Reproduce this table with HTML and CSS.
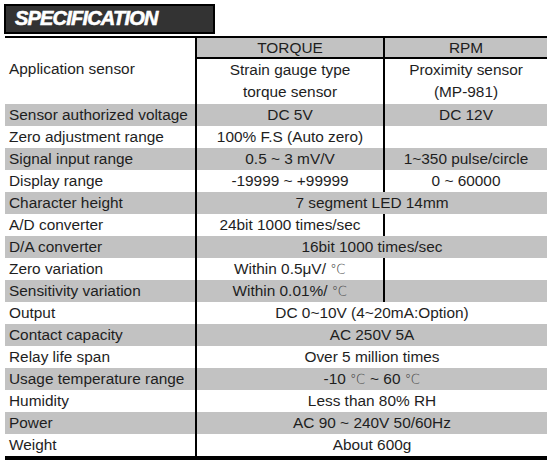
FILE: index.html
```html
<!DOCTYPE html>
<html lang="en">
<head>
  <meta charset="UTF-8">
  <title>Specification</title>
  <link rel="stylesheet" href="styles.css">
</head>
<body>
  <div class="title">SPECIFICATION</div>
  <table class="spec">
    <colgroup>
      <col class="c-name">
      <col class="c-torque">
      <col class="c-rpm">
    </colgroup>
    <tr class="head">
      <td class="name"></td>
      <td class="mid">TORQUE</td>
      <td>RPM</td>
    </tr>
    <tr class="tall">
      <td class="name">Application sensor</td>
      <td class="mid">Strain gauge type<br>torque sensor</td>
      <td>Proximity sensor<br>(MP-981)</td>
    </tr>
    <tr class="gray">
      <td class="name">Sensor authorized voltage</td>
      <td class="mid">DC 5V</td>
      <td>DC 12V</td>
    </tr>
    <tr>
      <td class="name">Zero adjustment range</td>
      <td class="mid">100% F.S (Auto zero)</td>
      <td></td>
    </tr>
    <tr class="gray">
      <td class="name">Signal input range</td>
      <td class="mid">0.5 ~ 3 mV/V</td>
      <td>1~350 pulse/circle</td>
    </tr>
    <tr>
      <td class="name">Display range</td>
      <td class="mid">-19999 ~ +99999</td>
      <td>0 ~ 60000</td>
    </tr>
    <tr class="gray">
      <td class="name">Character height</td>
      <td colspan="2">7 segment LED 14mm</td>
    </tr>
    <tr>
      <td class="name">A/D converter</td>
      <td class="mid">24bit 1000 times/sec</td>
      <td></td>
    </tr>
    <tr class="gray">
      <td class="name">D/A converter</td>
      <td colspan="2">16bit 1000 times/sec</td>
    </tr>
    <tr>
      <td class="name">Zero variation</td>
      <td class="mid">Within 0.5μV/ <span class="deg">℃</span></td>
      <td></td>
    </tr>
    <tr class="gray">
      <td class="name">Sensitivity variation</td>
      <td class="mid">Within 0.01%/ <span class="deg">℃</span></td>
      <td></td>
    </tr>
    <tr>
      <td class="name">Output</td>
      <td colspan="2">DC 0~10V (4~20mA:Option)</td>
    </tr>
    <tr class="gray">
      <td class="name">Contact capacity</td>
      <td colspan="2">AC 250V 5A</td>
    </tr>
    <tr>
      <td class="name">Relay life span</td>
      <td colspan="2">Over 5 million times</td>
    </tr>
    <tr class="gray">
      <td class="name">Usage temperature range</td>
      <td colspan="2">-10 <span class="deg">℃</span> ~ 60 <span class="deg">℃</span></td>
    </tr>
    <tr>
      <td class="name">Humidity</td>
      <td colspan="2">Less than 80% RH</td>
    </tr>
    <tr class="gray">
      <td class="name">Power</td>
      <td colspan="2">AC 90 ~ 240V 50/60Hz</td>
    </tr>
    <tr>
      <td class="name">Weight</td>
      <td colspan="2">About 600g</td>
    </tr>
  </table>
</body>
</html>
```

FILE: styles.css
```css
body {
  margin: 0;
  background: #fff;
  font-family: "Liberation Sans", Arial, sans-serif;
  color: #1e1e1e;
}
.title {
  box-sizing: border-box;
  width: 211px;
  height: 30px;
  margin: 4px 0 0 4px;
  padding-left: 9px;
  background: #333;
  border: 2px solid #000;
  color: #fff;
  font-size: 20px;
  font-weight: bold;
  font-style: italic;
  letter-spacing: -0.8px;
  line-height: 25px;
  -webkit-text-stroke: 0.6px #fff;
}
.spec {
  margin: 2px 0 0 5px;
  width: 542px;
  border-collapse: collapse;
  table-layout: fixed;
  border-top: 2px solid #000;
  border-bottom: 4px solid #000;
  font-size: 15.4px;
}
.c-name { width: 191px; }
.c-torque { width: 188px; }
.c-rpm { width: 163px; }
.spec td {
  padding: 0 4px;
  height: 22px;
  line-height: 22px;
  text-align: center;
  vertical-align: top;
  white-space: nowrap;
}
.spec td.name {
  text-align: left;
  border-right: 2px solid #000;
}
.spec td.mid {
  border-right: 2px solid #000;
}
.spec tr.head td {
  height: 19px;
  line-height: 19px;
}
.spec tr.head td.mid,
.spec tr.head td:last-child {
  background: #c2c2c2;
  border-bottom: 2px solid #000;
}
.spec tr.tall td {
  height: 45px;
}
.spec tr.gray td {
  background: #c2c2c2;
}
.deg {
  font-family: "DejaVu Sans", sans-serif;
  font-size: 14px;
  font-weight: 300;
  color: #444;
}
```
